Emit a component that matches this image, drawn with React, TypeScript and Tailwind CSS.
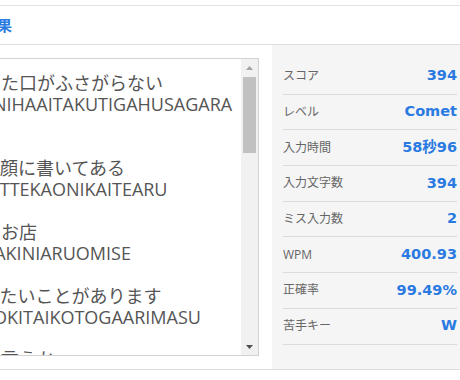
import React from 'react';

// typed sentences: kana line, romaji line; '' = blank line
const lines = [
  'あの人の理屈には開いた口がふさがらない',
  'ANOHITONORIKUTUNIHAAITAKUTIGAHUSAGARA',
  'NAI',
  '',
  '早く家に帰りたいって顔に書いてある',
  'HAYAKUIENIKAERITAITTEKAONIKAITEARU',
  '',
  '角を曲がった先にあるお店',
  'KADOWOMAGATTASAKINIARUOMISE',
  '',
  'あらかじめ伝えておきたいことがあります',
  'ARAKAZIMETUTAETEOKITAIKOTOGAARIMASU',
  '',
  'まあ、そのー、なんと言うか',
  'MAA,SONO-,NANTOIUKA',
];

const stats = [
  { label: 'スコア', value: '394' },
  { label: 'レベル', value: 'Comet' },
  { label: '入力時間', value: '58秒96' },
  { label: '入力文字数', value: '394' },
  { label: 'ミス入力数', value: '2' },
  { label: 'WPM', value: '400.93' },
  { label: '正確率', value: '99.49%' },
  { label: '苦手キー', value: 'W' },
];

export default function App() {
  return (
    <div className="w-[460px] h-[380px] overflow-hidden bg-white pt-[5px] font-['Open_Sans','Noto_Sans_CJK_JP',sans-serif]">
      <div className="border-t border-[#e3e3e3]">
        <div className="h-[39px] flex items-center border-b border-[#dddddd]">
          <h2 className="-ml-[18px] text-[15px] font-bold text-[#2a7ae2] font-['Noto_Sans_CJK_JP',sans-serif]">結果</h2>
        </div>

        <div className="flex h-[325px] border-b border-[#dddddd]">
          {/* text area */}
          <div className="shrink-0 -ml-[190px] w-[449px] pt-[13px]">
            <div className="flex h-[298px] border border-[#d2d2d2] bg-white">
              <div className="flex-1 min-w-0 overflow-hidden pl-[10px] pt-[14px] text-[18px] leading-[21.25px] text-[#555]">
                {lines.map((l, i) => (
                  <div key={i} className="h-[21.25px] whitespace-nowrap">
                    {l || '\u00a0'}
                  </div>
                ))}
              </div>
              <div className="w-[17px] shrink-0 flex flex-col bg-[#f1f1f1]">
                <div className="h-[17px] flex items-center justify-center">
                  <svg width="7" height="4" viewBox="0 0 7 4">
                    <path d="M0 4 L3.5 0 L7 4 Z" fill="#a3a3a3" />
                  </svg>
                </div>
                <div className="mt-[1px] mx-[2px] h-[76px] bg-[#c1c1c1]" />
                <div className="flex-1" />
                <div className="h-[17px] flex items-center justify-center">
                  <svg width="7" height="4" viewBox="0 0 7 4">
                    <path d="M0 0 L7 0 L3.5 4 Z" fill="#505050" />
                  </svg>
                </div>
              </div>
            </div>
          </div>

          {/* result stats */}
          <div className="ml-[13px] flex-1 bg-[#f5f5f5] pt-[14px] pl-[11px] pr-[3px]">
            {stats.map((s) => (
              <div
                key={s.label}
                className="h-[35.7px] flex items-center justify-between border-b border-[#dcdcdc]"
              >
                <span className="text-[12px] text-[#666]">{s.label}</span>
                <span className="text-[14.5px] font-bold text-[#2a7ae2] font-['DejaVu_Sans','Noto_Sans_CJK_JP',sans-serif]">
                  {s.value}
                </span>
              </div>
            ))}
          </div>
        </div>
      </div>
    </div>
  );
}
